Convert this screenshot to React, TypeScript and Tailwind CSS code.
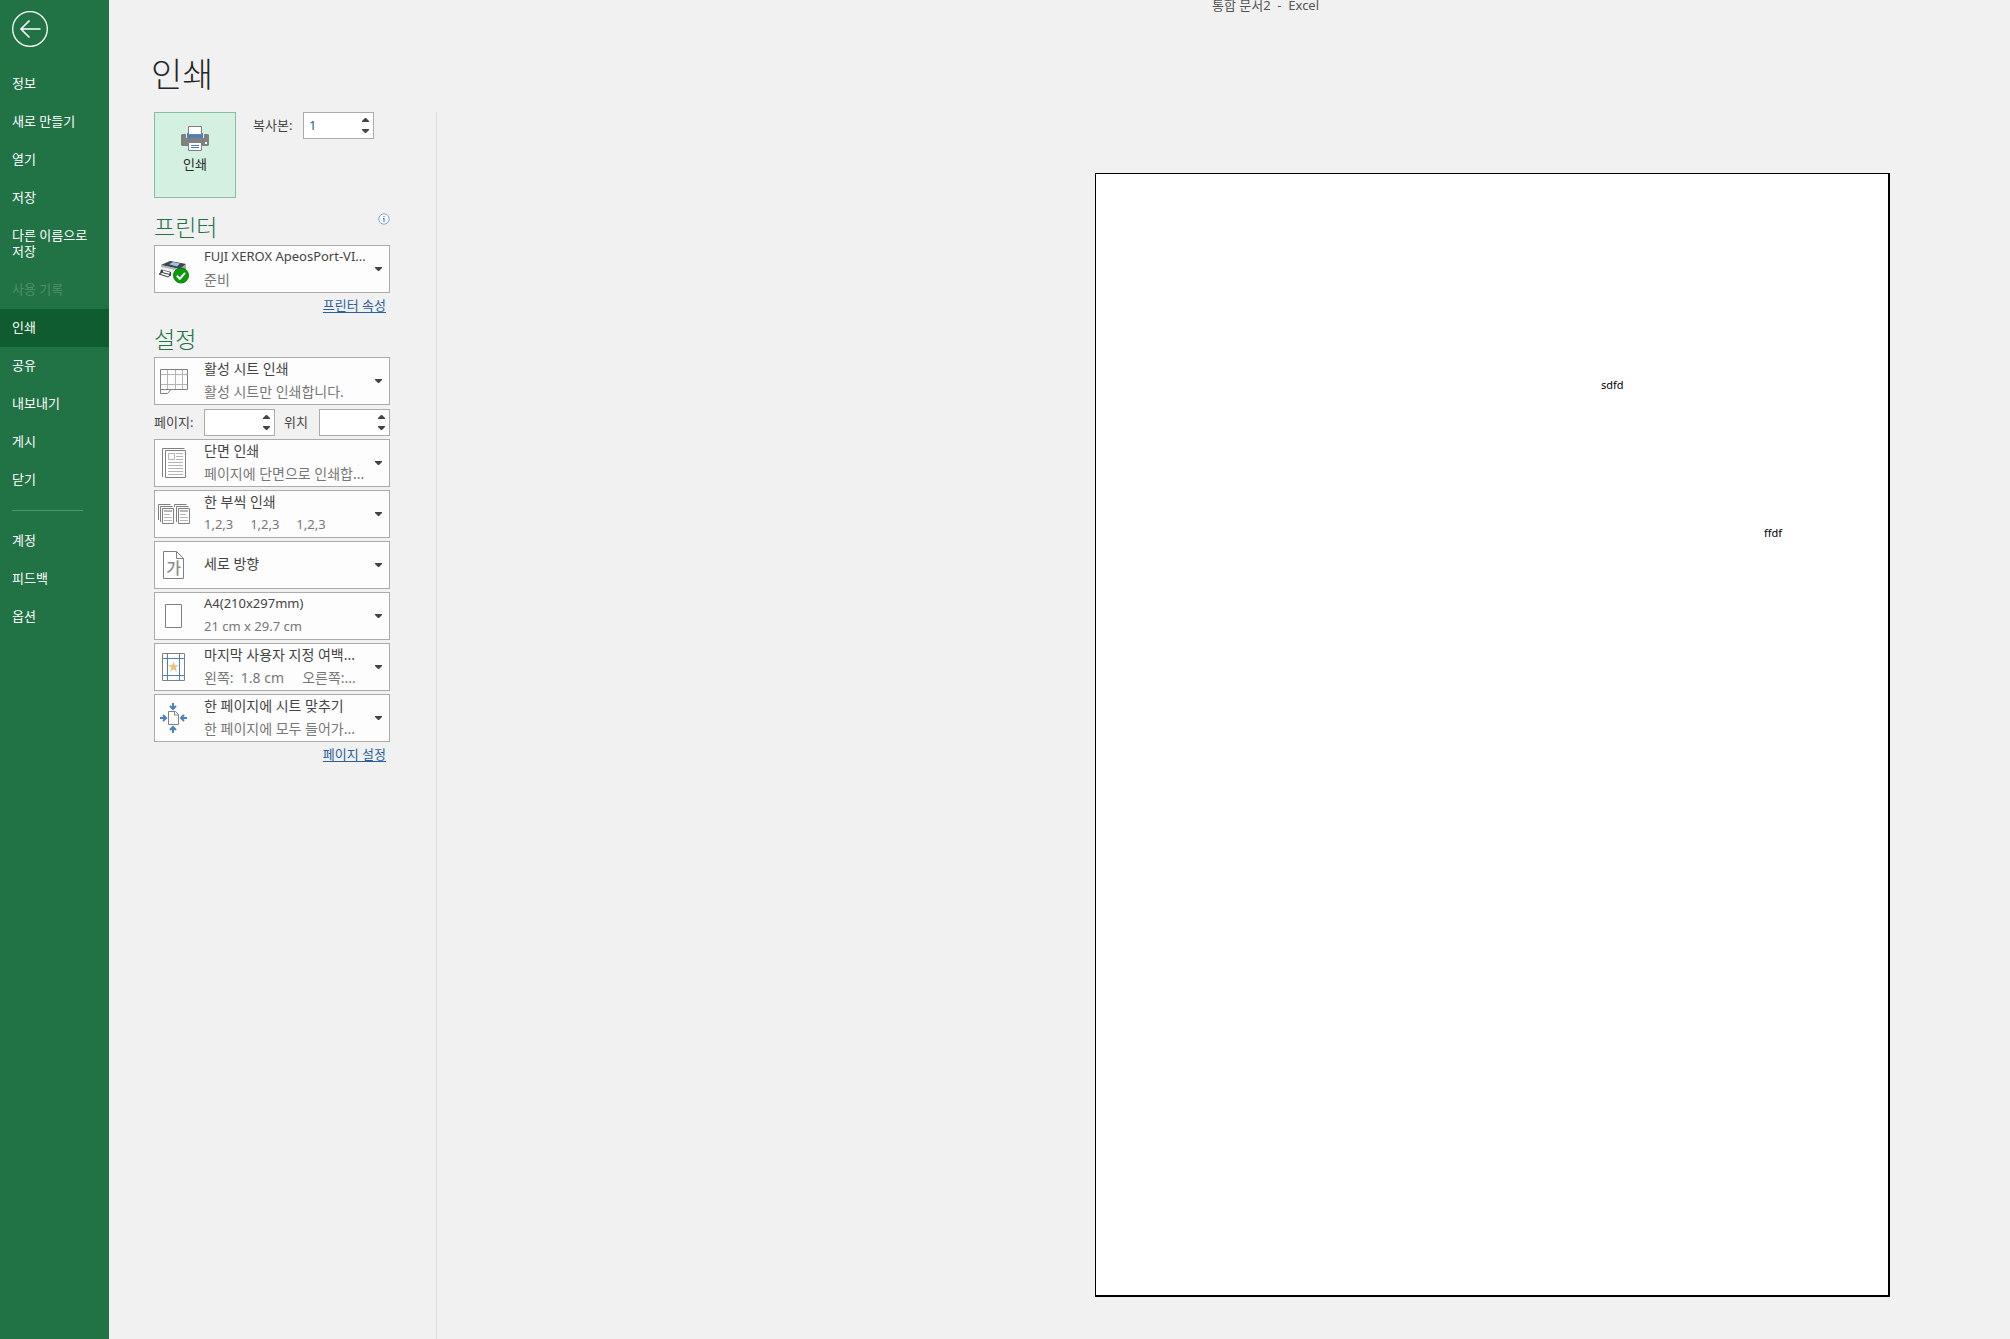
import { type ReactNode } from "react";

const NAV_MAIN = [
  { label: "정보" },
  { label: "새로 만들기" },
  { label: "열기" },
  { label: "저장" },
  { label: "다른 이름으로 저장" },
  { label: "사용 기록", disabled: true },
  { label: "인쇄", active: true },
  { label: "공유" },
  { label: "내보내기" },
  { label: "게시" },
  { label: "닫기" },
];
const NAV_FOOT = [{ label: "계정" }, { label: "피드백" }, { label: "옵션" }];

type NavEntry = { label: string; disabled?: boolean; active?: boolean };

function NavItem({ label, disabled, active }: NavEntry) {
  const tone = disabled
    ? "text-[#4f9169]"
    : active
      ? "bg-[#0e5c2f] text-white"
      : "text-white hover:bg-[#1a6539]";
  return (
    <li>
      <button
        type="button"
        disabled={disabled}
        aria-current={active ? "page" : undefined}
        className={`block w-full break-keep pb-3 pl-3 pr-2 pt-2.5 text-left text-[13px] leading-4 ${tone}`}
      >
        {label}
      </button>
    </li>
  );
}

function Caret() {
  return (
    <svg width="7" height="4" viewBox="0 0 7 4" className="shrink-0" aria-hidden="true">
      <path d="M0 0h7v1L4 4H3L0 1z" fill="#444" />
    </svg>
  );
}

function Spinner({ id, value = "" }: { id: string; value?: string }) {
  return (
    <div className="flex h-[27px] w-[71px] border border-[#ababab] bg-white">
      <input
        id={id}
        type="text"
        defaultValue={value}
        className="w-0 min-w-0 flex-1 bg-transparent pl-[5px] text-[13px] text-[#2a6099] outline-none"
      />
      <div className="flex w-4 flex-col py-px">
        <button type="button" aria-label="늘리기" className="flex flex-1 items-center justify-center">
          <svg width="7" height="4" viewBox="0 0 7 4" aria-hidden="true">
            <path d="M0 4h7V3L4 0H3L0 3z" fill="#444" />
          </svg>
        </button>
        <button type="button" aria-label="줄이기" className="flex flex-1 items-center justify-center">
          <Caret />
        </button>
      </div>
    </div>
  );
}

type OptionProps = { icon: ReactNode; title: string; detail?: string; latinTitle?: boolean; latinDetail?: boolean };

function Option({ icon, title, detail, latinTitle, latinDetail }: OptionProps) {
  return (
    <button
      type="button"
      aria-haspopup="listbox"
      className="flex h-12 w-full items-center border border-[#ababab] bg-[#fdfdfd] pr-[7px] text-left"
    >
      <span className="flex w-[37px] shrink-0 items-center justify-center">{icon}</span>
      <span className="min-w-0 flex-1 whitespace-pre pb-0.5 pl-3 leading-[23px]">
        <span className={`block text-[#444] ${latinTitle ? "text-[13px]" : "text-[14px]"} ${detail ? "" : "pb-0.5"}`}>
          {title}
        </span>
        {detail && (
          <span className={`block text-[#777] ${latinDetail ? "text-[13px]" : "text-[14px]"}`}>{detail}</span>
        )}
      </span>
      <Caret />
    </button>
  );
}

function PrintIcon() {
  return (
    <svg width="28" height="26" viewBox="0 0 28 26" aria-hidden="true">
      <path d="M1 8h4v4h18V8h4l1 1v10l-1 1H1l-1-1V9z" fill="#808080" />
      <path d="M6 7h16v5H6z" fill="#4a80bd" />
      <path d="M7.500 .5h13v8h-13z" fill="#fff" stroke="#808080" />
      <path d="M24 16h2v2h-2z" fill="#fff" />
      <path d="M7.500 16.500h13v8h-13z" fill="#fff" stroke="#808080" />
      <path d="M10 19.500h8M10 21.500h8" stroke="#4a80bd" />
    </svg>
  );
}

function PrinterReadyIcon() {
  return (
    <svg width="33" height="30" viewBox="-1 -6 33 30" aria-hidden="true">
      <path d="M3 5l9-4 16 3v8l-6 5-19-5z" fill="#d6dade" />
      <path d="M3 5l9-4 16 3-6 5z" fill="#3f454d" />
      <path d="M11 4.300l4-2.300 7 1.600-3 3z" fill="#9cc4e4" />
      <path d="M3 5l19 4v2L3 7z" fill="#aeb4ba" />
      <path d="M22 9l6-5v8l-6 5z" fill="#a2a8ae" />
      <path d="M3 7l19 4v5L3 11z" fill="#eef0f2" />
      <path d="M3 9.500l10 2.500v4L2 13z" fill="#3a3f46" />
      <path d="M5 10.500l7 2-1 2-6-1z" fill="#fff" />
      <path d="M1 14l3-1.500 8 2-1.500 2.500z" fill="#fff" stroke="#3a4048" />
      <circle cx="23" cy="15.500" r="7.500" fill="#0a9a0a" stroke="#0c7a10" />
      <path d="M18.800 15.800l3 3 5.200-6" fill="none" stroke="#fff" strokeWidth="2" />
    </svg>
  );
}

function SheetIcon() {
  return (
    <svg width="29" height="25" viewBox="-1 0 29 25" fill="none" aria-hidden="true">
      <path d="M1 5.500h26M1 15.500h26M7.500 1v19M15.500 1v19M22.500 1v19" stroke="#b5b5b5" />
      <path d="M.5 .5h27v20H.5zM.5 20v4.500h7l3.500-4" stroke="#808080" />
    </svg>
  );
}

function OneSidedIcon() {
  return (
    <svg width="25" height="31" viewBox="-1 0 25 31" fill="none" aria-hidden="true">
      <path d="M.5 29V.5h22" stroke="#808080" />
      <path d="M3.500 2.500h20v27h-20z" fill="#fff" stroke="#808080" />
      <path
        d="M6.500 5.500h6v6h-6zM14 5.500h7M14 8.500h7M14 11.500h7M6 14.500h15M6 17.500h15M6 20.500h15M6 23.500h15M6 26.500h15"
        stroke="#b5b5b5"
      />
    </svg>
  );
}

function CollateIcon() {
  return (
    <svg width="33" height="20" viewBox="-1 0 33 20" fill="none" aria-hidden="true">
      <path d="M.5 16V.5h12M2.500 18V2.500h12M16.500 3V.5h12M18.500 18V2.500h12" stroke="#808080" />
      <path d="M4.500 4.500h11v15h-11zM20.500 4.500h11v15h-11z" fill="#fff" stroke="#808080" />
      <path d="M6 7h8M22 7h8" stroke="#b5b5b5" strokeWidth="2" />
      <path d="M6 10.500h6M6 13.500h8M6 16.500h8M22 10.500h6M22 13.500h8M22 16.500h8" stroke="#b5b5b5" />
    </svg>
  );
}

function PortraitIcon() {
  return (
    <span className="relative flex">
      <svg width="21" height="28" viewBox="0 0 21 28" fill="none" aria-hidden="true">
        <path d="M.5 .5h13l7 7v20H.5z" fill="#fff" stroke="#808080" />
        <path d="M13.500 .5v7h7" stroke="#808080" />
      </svg>
      <span className="absolute inset-x-0 bottom-px text-center text-base font-medium leading-5 text-[#8c8c8c]">가</span>
    </span>
  );
}

function PaperIcon() {
  return (
    <svg width="17" height="24" viewBox="0 0 17 24" aria-hidden="true">
      <path d="M.5 .5h16v23H.5z" fill="#fff" stroke="#808080" />
    </svg>
  );
}

function MarginsIcon() {
  return (
    <svg width="23" height="28" viewBox="0 0 23 28" fill="none" aria-hidden="true">
      <path d="M.5 .5h22v27H.5z" fill="#fff" stroke="#808080" />
      <path d="M5.500 1v26M17.500 1v26M1 5.500h21M1 22.500h21" stroke="#4a80bd" />
      <path d="M11.500 8.500l1.400 3.700h4l-3.200 2.400 1.300 4.200-3.500-2.600L8 18.800l1.300-4.200-3.200-2.400h4z" fill="#edc07d" />
    </svg>
  );
}

function FitPageIcon() {
  return (
    <svg width="27" height="30" viewBox="0 0 27 30" fill="none" aria-hidden="true">
      <path d="M8.500 8.500h7l3 3v10h-10z" fill="#fff" stroke="#808080" />
      <path d="M14.500 8.500v3.500h4" stroke="#808080" />
      <g stroke="#4a80bd" strokeWidth="2">
        <path d="M13 0v5.500M10 3l3 3 3-3" />
        <path d="M13 30v-5.500M10 27l3-3 3 3" />
        <path d="M0 15h5.500M3 12l3 3-3 3" />
        <path d="M27 15h-5.500M24 12l-3 3 3 3" />
      </g>
    </svg>
  );
}

export default function App() {
  return (
    <div className="flex min-h-screen bg-[#f1f1f1] font-['Noto_Sans','Noto_Sans_CJK_KR',sans-serif] text-[#444]">
      <nav className="w-[109px] shrink-0 bg-[#217346] pt-[11px]">
        <button type="button" aria-label="뒤로" className="ml-3 block">
          <svg width="36" height="36" viewBox="0 0 36 36" fill="none" stroke="#fff" aria-hidden="true">
            <circle cx="18" cy="18" r="17.300" strokeWidth="1.300" />
            <path d="M28.500 18H9M17.500 9.500L9 18l8.500 8.500" strokeWidth="1.600" />
          </svg>
        </button>
        <ul className="mt-[18px]">
          {NAV_MAIN.map((item) => (
            <NavItem key={item.label} {...item} />
          ))}
        </ul>
        <hr className="my-[11px] ml-3 w-[71px] border-[#4b9a6c]" />
        <ul>
          {NAV_FOOT.map((item) => (
            <NavItem key={item.label} {...item} />
          ))}
        </ul>
      </nav>

      <main className="flex flex-1 flex-col">
        <header className="h-[112px] pl-[42px]">
          <p className="h-3 pl-[370px] text-center text-[13px] leading-[10px] text-[#555]">
            통합 문서2&nbsp; -&nbsp; Excel
          </p>
          <h1 className="mt-10 text-[34px] font-light leading-[44px] text-[#262626]">인쇄</h1>
        </header>

        <div className="flex flex-1">
          <section className="w-[328px] shrink-0 border-r border-[#dcdcdc] pl-[45px] pr-[46px]">
            <div className="flex items-start">
              <button
                type="button"
                className="flex h-[86px] w-[82px] flex-col items-center border border-[#86bfa0] bg-[#d3f0e0] pt-[13px] text-[13px] leading-6 text-[#262626]"
              >
                <PrintIcon />
                인쇄
              </button>
              <label htmlFor="copies" className="ml-[17px] w-[50px] text-[13px] leading-[26px]">
                복사본:
              </label>
              <Spinner id="copies" value="1" />
            </div>

            <div className="mt-[15px] flex items-start justify-between">
              <h2 className="text-[23px] font-light leading-7 text-[#217346]">프린터</h2>
              <button type="button" aria-label="프린터 정보">
                <svg width="12" height="12" viewBox="0 0 12 12" fill="none" aria-hidden="true">
                  <circle cx="6" cy="6" r="5.200" fill="#f8fbff" stroke="#7fa3d8" />
                  <path d="M5.500 3h1v1h-1zM5 5h1.500v4h-1V6H5z" fill="#3d6db5" />
                </svg>
              </button>
            </div>
            <div className="mt-1">
              <Option icon={<PrinterReadyIcon />} title="FUJI XEROX ApeosPort-VI..." detail="준비" latinTitle />
            </div>
            <div className="mt-0.5 pr-1 text-right text-[13px] leading-5">
              <a href="#printer" className="text-[#2a6099] underline underline-offset-2">
                프린터 속성
              </a>
            </div>

            <h2 className="mt-2.5 text-[23px] font-light leading-7 text-[#217346]">설정</h2>
            <div className="mt-1 flex flex-col gap-[3px]">
              <Option icon={<SheetIcon />} title="활성 시트 인쇄" detail="활성 시트만 인쇄합니다." />
              <div className="flex items-center pt-px text-[13px]">
                <label htmlFor="page-from" className="w-[50px]">
                  페이지:
                </label>
                <Spinner id="page-from" />
                <label htmlFor="page-to" className="flex-1 pl-[9px]">
                  위치
                </label>
                <Spinner id="page-to" />
              </div>
              <Option icon={<OneSidedIcon />} title="단면 인쇄" detail="페이지에 단면으로 인쇄합..." />
              <Option icon={<CollateIcon />} title="한 부씩 인쇄" detail="1,2,3     1,2,3     1,2,3" latinDetail />
              <Option icon={<PortraitIcon />} title="세로 방향" />
              <Option icon={<PaperIcon />} title="A4(210x297mm)" detail="21 cm x 29.7 cm" latinTitle latinDetail />
              <Option icon={<MarginsIcon />} title="마지막 사용자 지정 여백..." detail="왼쪽:  1.8 cm     오른쪽:..." />
              <Option icon={<FitPageIcon />} title="한 페이지에 시트 맞추기" detail="한 페이지에 모두 들어가..." />
            </div>
            <div className="mt-0.5 pr-1 text-right text-[13px] leading-5">
              <a href="#page-setup" className="text-[#2a6099] underline underline-offset-2">
                페이지 설정
              </a>
            </div>
          </section>

          <section aria-label="미리 보기" className="flex flex-1 justify-end pb-[42px] pr-[120px] pt-[61px]">
            <div className="relative aspect-[795/1124] border border-b-2 border-r-2 border-black bg-white text-[11px] leading-4 text-black">
              <span className="absolute left-[505px] top-[203px]">sdfd</span>
              <span className="absolute left-[668px] top-[351px]">ffdf</span>
            </div>
          </section>
        </div>
      </main>
    </div>
  );
}
